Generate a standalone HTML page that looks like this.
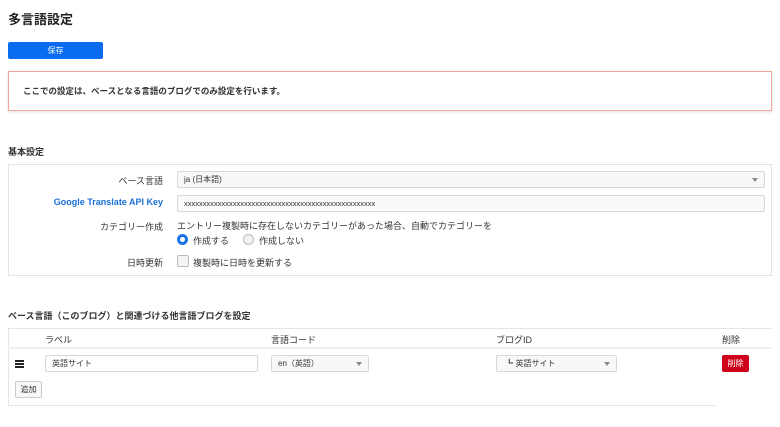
<!DOCTYPE html>
<html><head><meta charset="utf-8"><style>
*{box-sizing:border-box;margin:0;padding:0}
body{width:780px;height:427px;background:#fff;font-family:"Liberation Sans","Noto Sans CJK JP",sans-serif;color:#222;position:relative;overflow:hidden;font-size:9px}
.a{position:absolute}
h1{position:absolute;left:8px;top:9px;font-size:13px;font-weight:bold;color:#222}
.btn{left:8px;top:42px;width:95px;height:17px;background:#0a6cf0;border-radius:2px;color:#fff;text-align:center;line-height:17px;font-size:8px}
.note{left:8px;top:71px;width:764px;height:40px;border:1px solid #f3a597;box-shadow:0 1px 3px rgba(0,0,0,.12);padding-left:14px;line-height:38px;font-size:8.5px;font-weight:bold;color:#333}
.h2{font-size:9px;font-weight:bold;color:#333}
.panel{left:8px;top:164px;width:764px;height:112px;border:1px solid #e3e3e3}
.lbl{width:155px;text-align:right;font-size:9px;color:#333}
.inp{border:1px solid #d8d8d8;border-radius:2px;background:#f8f8f8;height:17px;line-height:15px;padding-left:6px;font-size:8px;color:#333}
.arr{position:absolute;right:6px;top:6px;width:0;height:0;border-left:3px solid transparent;border-right:3px solid transparent;border-top:4px solid #888}
.radio{width:11px;height:11px;border-radius:50%}
</style></head><body>
<h1>多言語設定</h1>
<div class="a btn">保存</div>
<div class="a note">ここでの設定は、ベースとなる言語のブログでのみ設定を行います。</div>
<div class="a h2" style="left:8px;top:145px">基本設定</div>
<div class="a panel"></div>
<div class="a lbl" style="left:8px;top:174px">ベース言語</div>
<div class="a inp" style="left:177px;top:171px;width:588px">ja (日本語)<span class="arr"></span></div>
<div class="a lbl" style="left:8px;top:197px;color:#1a6fd8;font-weight:bold">Google Translate API Key</div>
<div class="a inp" style="left:177px;top:195px;width:588px;background:#fafafa;font-size:7.5px">xxxxxxxxxxxxxxxxxxxxxxxxxxxxxxxxxxxxxxxxxxxxxxxxxxx</div>
<div class="a lbl" style="left:8px;top:220px">カテゴリー作成</div>
<div class="a" style="left:177px;top:219px;font-size:9px;color:#333">エントリー複製時に存在しないカテゴリーがあった場合、自動でカテゴリーを</div>
<div class="a radio" style="left:177px;top:234px;background:#fff;border:3px solid #1a73e8"></div>
<div class="a" style="left:193px;top:234px;color:#333">作成する</div>
<div class="a radio" style="left:243px;top:234px;border:1px solid #bbb;background:#f2f2f2"></div>
<div class="a" style="left:259px;top:234px;color:#333">作成しない</div>
<div class="a lbl" style="left:8px;top:256px">日時更新</div>
<div class="a" style="left:177px;top:255px;width:12px;height:12px;border:1px solid #bbb;border-radius:2px;background:#f4f4f4"></div>
<div class="a" style="left:193px;top:256px;color:#333">複製時に日時を更新する</div>
<div class="a h2" style="left:8px;top:309px">ベース言語（このブログ）と関連づける他言語ブログを設定</div>
<div class="a" style="left:8px;top:328px;width:764px;height:78px;border:1px solid #e6e6e6;border-right:none;border-bottom:none"></div>
<div class="a" style="left:8px;top:405px;width:708px;height:1px;background:#e6e6e6"></div>
<div class="a" style="left:8px;top:347px;width:764px;height:2px;background:#efefef"></div>
<div class="a" style="left:45px;top:333px;color:#333">ラベル</div>
<div class="a" style="left:271px;top:333px;color:#333">言語コード</div>
<div class="a" style="left:496px;top:333px;color:#333">ブログID</div>
<div class="a" style="left:722px;top:333px;color:#333">削除</div>
<div class="a" style="left:15px;top:360px;width:9px;height:2px;background:#222;box-shadow:0 3px 0 #222,0 6px 0 #222"></div>
<div class="a inp" style="left:45px;top:355px;width:213px;background:#fff;font-size:8px">英語サイト</div>
<div class="a inp" style="left:271px;top:355px;width:98px;font-size:8px">en（英語）<span class="arr"></span></div>
<div class="a inp" style="left:496px;top:355px;width:121px;font-size:8px">&nbsp;┗ 英語サイト<span class="arr"></span></div>
<div class="a" style="left:722px;top:355px;width:27px;height:17px;background:#d0021b;border-radius:2px;color:#fff;font-size:8px;text-align:center;line-height:17px">削除</div>
<div class="a" style="left:15px;top:381px;width:27px;height:17px;border:1px solid #ccc;border-radius:2px;background:#f8f8f8;font-size:8px;text-align:center;line-height:15px;color:#333">追加</div>
</body></html>
